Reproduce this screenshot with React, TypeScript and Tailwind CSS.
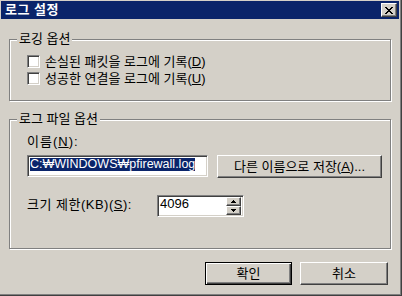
import React from "react";

const font = { fontFamily: '"Liberation Sans", "Noto Sans CJK KR", sans-serif' };

function Raised({
  children,
  className = "",
  isDefault = false,
}: {
  children: React.ReactNode;
  className?: string;
  isDefault?: boolean;
}) {
  const frame = isDefault
    ? "border border-black shadow-[inset_1px_1px_0_#fff,inset_-1px_-1px_0_#404040,inset_-2px_-2px_0_#808080]"
    : "border border-t-white border-l-white border-r-[#404040] border-b-[#404040] shadow-[inset_-1px_-1px_0_#808080]";
  return (
    <button
      type="button"
      className={`flex items-center justify-center bg-[#d4d0c8] text-[13px] leading-[14px] text-black ${frame} ${className}`}
    >
      {children}
    </button>
  );
}

function Checkbox({ label, hotkey }: { label: string; hotkey: string }) {
  return (
    <label className="flex h-[13px] items-center gap-[5px]">
      <span className="h-[13px] w-[13px] shrink-0 border border-t-[#808080] border-l-[#808080] border-r-white border-b-white bg-white shadow-[inset_1px_1px_0_#404040,inset_-1px_-1px_0_#d4d0c8]" />
      <span className="whitespace-nowrap text-[13px] leading-[14px]">
        {label}(<u>{hotkey}</u>)
      </span>
    </label>
  );
}

function GroupBox({
  title,
  className = "",
  children,
}: {
  title: string;
  className?: string;
  children: React.ReactNode;
}) {
  return (
    <div
      className={`relative ml-[9px] w-[382px] border border-[#808080] shadow-[inset_1px_1px_0_#fff,1px_1px_0_#fff] ${className}`}
    >
      {/* legend sits over the etched line */}
      <span className="absolute -top-[8px] left-[7px] bg-[#d4d0c8] px-[2px] text-[13px] leading-[14px] whitespace-nowrap">
        {title}
      </span>
      {children}
    </div>
  );
}

const sunken =
  "border border-t-[#808080] border-l-[#808080] border-r-white border-b-white shadow-[inset_1px_1px_0_#404040,inset_-1px_-1px_0_#d4d0c8] bg-white";

export default function App() {
  return (
    <div
      style={font}
      className="flex h-[296px] w-[402px] flex-col border-r border-b border-r-[#404040] border-b-[#404040] bg-[#d4d0c8] text-black shadow-[inset_-1px_-1px_0_#808080]"
    >
      {/* Title bar */}
      <div className="mt-[1px] ml-[1px] mr-[2px] flex h-[18px] items-center justify-between bg-[#0a246a] pl-[4px] pr-[2px]">
        <span className="text-[13px] leading-[14px] font-bold tracking-[0.5px] text-white">
          로그 설정
        </span>
        <button
          type="button"
          className="flex h-[14px] w-[16px] items-center justify-center border border-t-white border-l-white border-r-[#404040] border-b-[#404040] bg-[#d4d0c8] shadow-[inset_-1px_-1px_0_#808080]"
          aria-label="Close"
        >
          <svg width="8" height="7" viewBox="0 0 8 7" shapeRendering="crispEdges">
            <path
              d="M0 0h2v1H0zM6 0h2v1H6zM1 1h2v1H1zM5 1h2v1H5zM2 2h4v1H2zM3 3h2v1H3zM2 4h4v1H2zM1 5h2v1H1zM5 5h2v1H5zM0 6h2v1H0zM6 6h2v1H6z"
              fill="#000"
            />
          </svg>
        </button>
      </div>

      {/* 로깅 옵션 */}
      <GroupBox title="로깅 옵션" className="mt-[20px] h-[62px]">
        <div className="flex flex-col gap-[4px] pt-[15px] pl-[17px]">
          <Checkbox label="손실된 패킷을 로그에 기록" hotkey="D" />
          <Checkbox label="성공한 연결을 로그에 기록" hotkey="U" />
        </div>
      </GroupBox>

      {/* 로그 파일 옵션 */}
      <GroupBox title="로그 파일 옵션" className="mt-[18px] h-[130px]">
        <div className="flex flex-col pl-[17px]">
          <span className="mt-[15px] h-[14px] text-[13px] leading-[14px] tracking-[1px]">
            이름(<u>N</u>):
          </span>
          <div className="mt-[6px] flex items-start gap-[9px]">
            <div className={`flex h-[22px] w-[181px] items-start pt-[2px] pl-[2px] ${sunken}`}>
              <span className="block bg-[#0a246a] text-[12.5px] leading-[13px] whitespace-nowrap text-white">
                C:₩WINDOWS₩pfirewall.log
              </span>
            </div>
            <Raised className="h-[23px] w-[165px]">
              다른 이름으로 저장(<u>A</u>)...
            </Raised>
          </div>
          <div className="mt-[17px] flex items-start">
            <span className="mt-[3px] w-[130px] text-[13px] leading-[13px] tracking-[0.5px] whitespace-nowrap">
              크기 제한(KB)(<u>S</u>):
            </span>
            <div className={`flex h-[22px] w-[87px] items-start justify-between pt-[1px] pl-[2px] pr-[2px] ${sunken}`}>
              <span className="text-[13px] leading-[14px]">4096</span>
              <div className="flex flex-col">
                <Raised className="h-[9px] w-[15px]">
                  <svg width="5" height="3" viewBox="0 0 5 3">
                    <path d="M2 0h1v1h1v1h1v1H0V2h1V1h1z" fill="#000" />
                  </svg>
                </Raised>
                <Raised className="h-[9px] w-[15px]">
                  <svg width="5" height="3" viewBox="0 0 5 3">
                    <path d="M0 0h5v1H4v1H3v1H2V2H1V1H0z" fill="#000" />
                  </svg>
                </Raised>
              </div>
            </div>
          </div>
        </div>
      </GroupBox>

      {/* Dialog buttons */}
      <div className="mt-[13px] mr-[13px] flex justify-end gap-[8px]">
        <Raised isDefault className="h-[23px] w-[87px]">
          확인
        </Raised>
        <Raised className="h-[23px] w-[88px]">취소</Raised>
      </div>
    </div>
  );
}
